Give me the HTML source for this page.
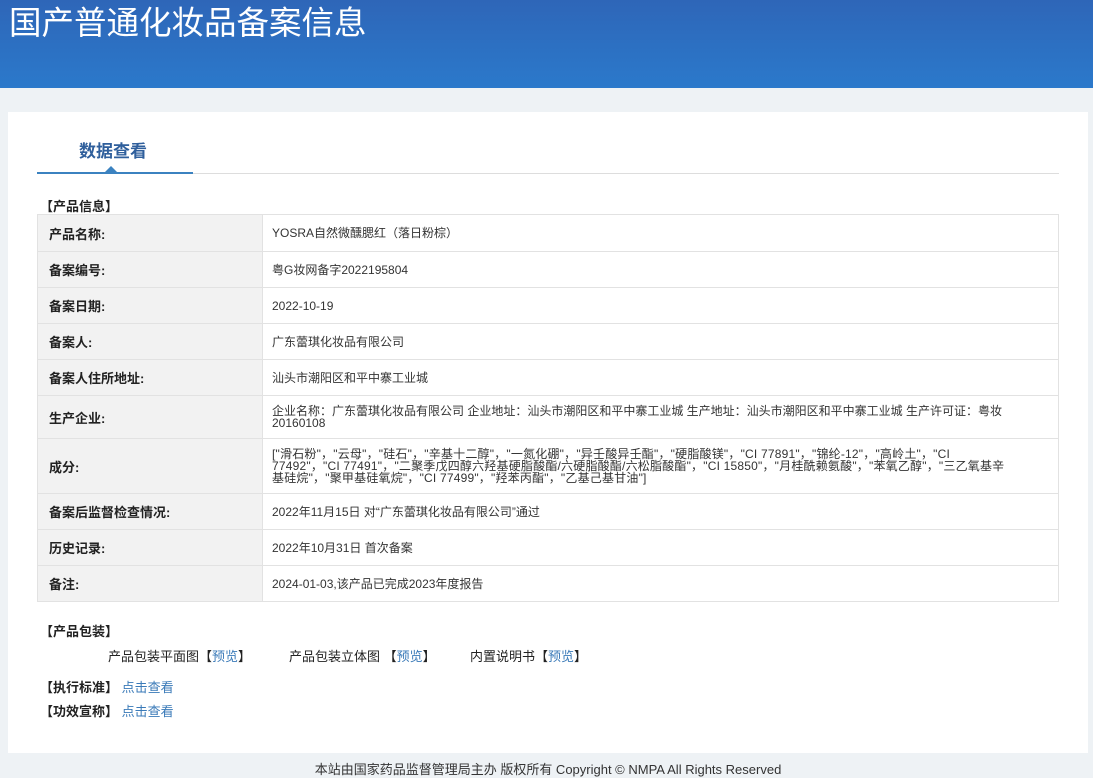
<!DOCTYPE html>
<html><head><meta charset="utf-8">
<style>
*{margin:0;padding:0;box-sizing:border-box}
body{width:1093px;height:778px;overflow:hidden;background:#eef2f5;font-family:"Liberation Sans","Noto Sans CJK SC",sans-serif;color:#333;font-size:12px;position:relative}
.hdr{position:absolute;left:0;top:0;width:1093px;height:88px;background:linear-gradient(180deg,#2e66b8 0%,#2b79cb 100%)}
.hdr h1{position:absolute;left:9px;top:1px;font-size:32.5px;font-weight:normal;color:#fff;line-height:44px}
.panel{position:absolute;left:8px;top:112px;width:1080px;height:641px;background:#fff}
.tab{position:absolute;left:79px;top:137px;font-size:17px;font-weight:bold;color:#2f5f9c}
.line{position:absolute;left:37px;top:173px;width:1022px;height:1px;background:#ddd}
.line2{position:absolute;left:37px;top:172px;width:156px;height:2px;background:#3b82c0}
.tri{position:absolute;left:105px;top:166px;width:0;height:0;border-left:6px solid transparent;border-right:6px solid transparent;border-bottom:6px solid #3b82c0}
.sec{position:absolute;font-size:13px;font-weight:bold;color:#222}
table{position:absolute;left:37px;top:214px;width:1022px;border-collapse:collapse;border:1px solid #a9bdd3}
td{border:1px solid #e2e2e2;font-size:12px;vertical-align:middle}
td.l{width:225px;background:#f2f2f2;font-weight:bold;font-size:13px;padding-left:11px;color:#222}
td.r{padding:0 10px 0 9px;line-height:12px;color:#333}
a{color:#3a7ab8;text-decoration:none}
.t{position:absolute;font-size:13px;color:#222}
.foot{position:absolute;top:759px;left:0;width:1093px;text-align:center;font-size:13px;color:#333;padding-left:3px}
</style></head><body>
<div class="hdr"><h1>国产普通化妆品备案信息</h1></div>
<div class="panel"></div>
<div class="tab">数据查看</div>
<div class="line"></div><div class="line2"></div><div class="tri"></div>
<div class="sec" style="left:40px;top:196px">【产品信息】</div>
<table>
<tr style="height:37px"><td class="l">产品名称:</td><td class="r">YOSRA自然微醺腮红（落日粉棕）</td></tr>
<tr style="height:36px"><td class="l">备案编号:</td><td class="r">粤G妆网备字2022195804</td></tr>
<tr style="height:36px"><td class="l">备案日期:</td><td class="r">2022-10-19</td></tr>
<tr style="height:36px"><td class="l">备案人:</td><td class="r">广东蕾琪化妆品有限公司</td></tr>
<tr style="height:36px"><td class="l">备案人住所地址:</td><td class="r">汕头市潮阳区和平中寨工业城</td></tr>
<tr style="height:43px"><td class="l">生产企业:</td><td class="r">企业名称：广东蕾琪化妆品有限公司 企业地址：汕头市潮阳区和平中寨工业城 生产地址：汕头市潮阳区和平中寨工业城 生产许可证：粤妆<br>20160108</td></tr>
<tr style="height:55px"><td class="l">成分:</td><td class="r" style="letter-spacing:0.2px">["滑石粉"，"云母"，"硅石"，"辛基十二醇"，"一氮化硼"，"异壬酸异壬酯"，"硬脂酸镁"，"CI 77891"，"锦纶-12"，"高岭土"，"CI<br>77492"，"CI 77491"，"二聚季戊四醇六羟基硬脂酸酯/六硬脂酸酯/六松脂酸酯"，"CI 15850"，"月桂酰赖氨酸"，"苯氧乙醇"，"三乙氧基辛<br>基硅烷"，"聚甲基硅氧烷"，"CI 77499"，"羟苯丙酯"，"乙基己基甘油"]</td></tr>
<tr style="height:36px"><td class="l">备案后监督检查情况:</td><td class="r">2022年11月15日 对“广东蕾琪化妆品有限公司”通过</td></tr>
<tr style="height:36px"><td class="l">历史记录:</td><td class="r">2022年10月31日 首次备案</td></tr>
<tr style="height:36px"><td class="l">备注:</td><td class="r">2024-01-03,该产品已完成2023年度报告</td></tr>
</table>
<div class="sec" style="left:40px;top:621px">【产品包装】</div>
<div class="t" style="left:108px;top:646px">产品包装平面图【<a>预览</a>】</div>
<div class="t" style="left:289px;top:646px">产品包装立体图 【<a>预览</a>】</div>
<div class="t" style="left:470px;top:646px">内置说明书【<a>预览</a>】</div>
<div class="sec" style="left:40px;top:677px">【执行标准】 <a style="font-weight:normal">点击查看</a></div>
<div class="sec" style="left:40px;top:701px">【功效宣称】 <a style="font-weight:normal">点击查看</a></div>
<div class="foot">本站由国家药品监督管理局主办 版权所有 Copyright © NMPA All Rights Reserved</div>
</body></html>
